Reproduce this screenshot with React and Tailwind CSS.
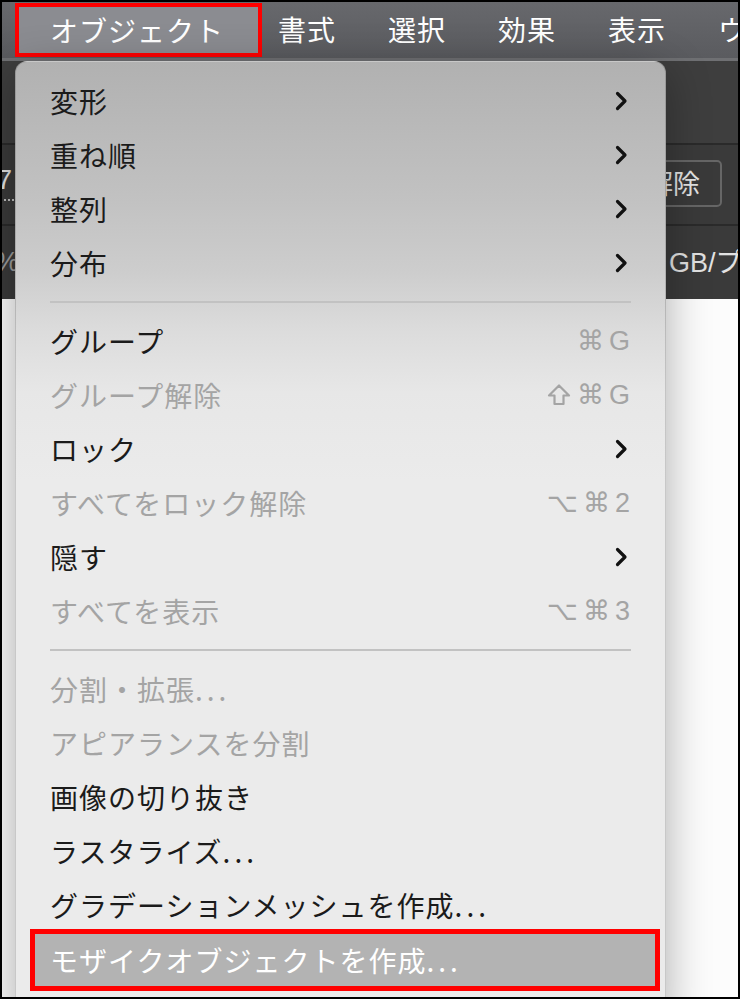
import React from 'react';

const items = [
    { label: '変形', sub: true },
    { label: '重ね順', sub: true },
    { label: '整列', sub: true },
    { label: '分布', sub: true },
    { sep: true },
    { label: 'グループ', keys: ['⌘', 'G'] },
    { label: 'グループ解除', keys: ['shift', '⌘', 'G'], disabled: true },
    { label: 'ロック', sub: true },
    { label: 'すべてをロック解除', keys: ['⌥', '⌘', '2'], disabled: true },
    { label: '隠す', sub: true },
    { label: 'すべてを表示', keys: ['⌥', '⌘', '3'], disabled: true },
    { sep: true },
    { label: '分割・拡張...', disabled: true },
    { label: 'アピアランスを分割', disabled: true },
    { label: '画像の切り抜き' },
    { label: 'ラスタライズ...' },
    { label: 'グラデーションメッシュを作成...' },
    { label: 'モザイクオブジェクトを作成...', active: true },
];

const jp = { fontFamily: '"Noto Sans CJK JP", "Noto Sans", sans-serif' };
const sym = { fontFamily: '"Liberation Sans", "DejaVu Sans", sans-serif' };

// trailing "..." gets wider spacing like the mac menu font
const Label = ({ text }) => {
    if (text.endsWith('...')) {
        return (
            <>
                {text.slice(0, -3)}
                <span className="tracking-[4px]">...</span>
            </>
        );
    }
    return text;
};

const Chevron = () => (
    <svg width="13" height="20" viewBox="0 0 13 20" className="mr-[3px]">
        <polyline points="2.5,2.5 10,10 2.5,17.5" fill="none" stroke="#111" strokeWidth="3.2" strokeLinecap="round" strokeLinejoin="round" />
    </svg>
);

const ShiftKey = () => (
    <svg width="24" height="24" viewBox="0 0 24 24" className="mr-[2px]">
        <path d="M12 2.5 L22 12.5 L16.5 12.5 L16.5 21 L7.5 21 L7.5 12.5 L2 12.5 Z" fill="none" stroke="#a4a4a4" strokeWidth="2.2" strokeLinejoin="round" />
    </svg>
);

const MenuRow = ({ item }) => {
    if (item.sep) {
        return (
            <div className="h-[24px] flex items-start pt-[11px] px-[34px]">
                <div className="h-[2px] w-full bg-[#c2c2c2]" />
            </div>
        );
    }
    if (item.active) {
        return (
            <div className="mt-[2px] ml-[19px] mr-[10px] h-[52px] bg-[#b3b3b3] outline-[5px] outline-solid outline-[#ff0000] flex items-center pl-[15px] text-white text-[28px] tracking-[1px]" style={jp}>
                <Label text={item.label} />
            </div>
        );
    }
    return (
        <div className={`h-[54px] flex items-center justify-between pl-[34px] pr-[34px] text-[28px] tracking-[1px] ${item.disabled ? 'text-[#a4a4a4]' : 'text-[#1b1b1b]'}`}>
            <span style={jp}><Label text={item.label} /></span>
            {item.sub && <Chevron />}
            {item.keys && (
                <span className="flex items-center gap-[4px] text-[27px] text-[#a4a4a4]" style={sym}>
                    {item.keys.map((k, i) => (k === 'shift' ? <ShiftKey key={i} /> : <span key={i}>{k}</span>))}
                </span>
            )}
        </div>
    );
};

export default function App() {
    return (
        <div className="relative w-[740px] h-[999px] overflow-hidden bg-[#fcfcfc]" style={jp}>
            {/* app menu bar */}
            <div className="h-[58px] flex items-start bg-gradient-to-b from-[#68696d] to-[#5a5b5f] overflow-hidden">
                <div className="shrink-0 ml-[15px] mt-[3px] h-[54px] w-[247px] border-[4px] border-[#ff0000] bg-[#8b8c91] flex items-center pl-[31px] text-white text-[28px] tracking-[1px]">
                    オブジェクト
                </div>
                <div className="shrink-0 ml-[16px] h-full flex items-center gap-[52px] text-white text-[28px] tracking-[1px] whitespace-nowrap">
                    <span>書式</span>
                    <span>選択</span>
                    <span>効果</span>
                    <span>表示</span>
                    <span>ウィンドウ</span>
                </div>
            </div>
            <div className="h-[3px] bg-[#6f7073]" />

            {/* workspace behind the menu */}
            <div className="h-[84px] bg-[#3e3e3e] border-b-2 border-[#2a2a2a]" />
            <div className="h-[81px] bg-[#3a3a3a] border-b-2 border-[#2a2a2a] flex items-start justify-between">
                <div className="mt-[20px] flex flex-col">
                    <span className="text-[27px] leading-[30px] text-[#e2e2e2] -ml-[3px]" style={sym}>7</span>
                    <span className="mt-[4px] w-[14px] border-b-2 border-dotted border-[#bdbdbd]" />
                </div>
                <div className="mt-[15px] mr-[18px] h-[47px] flex items-center pl-[20px] pr-[20px] border-2 border-[#666] rounded-[5px] text-[27px] text-[#e4e4e4]">
                    解除
                </div>
            </div>
            <div className="h-[73px] bg-[#3a3a3a] flex items-center justify-between">
                <span className="text-[27px] text-[#9c9c9c] -ml-[5px]" style={sym}>%</span>
                <span className="w-[71px] overflow-hidden whitespace-nowrap text-[27px] text-[#e2e2e2]">
                    <span style={sym}>GB/</span>プレビュー
                </span>
            </div>

            {/* object menu dropdown */}
            <div className="absolute left-[15px] top-[61px] w-[651px] h-[960px] rounded-t-[12px] border border-black/15 shadow-[0_10px_45px_rgba(0,0,0,0.32)] bg-[linear-gradient(to_bottom,#b1b1b1_0px,#c2c2c2_140px,#cdcdcd_210px,#dbdbdb_265px,#e7e7e7_330px,#ebebeb_420px,#ebebeb_100%)]">
                <div className="pt-[12px]">
                    {items.map((item, i) => <MenuRow key={i} item={item} />)}
                </div>
            </div>

            {/* screenshot frame */}
            <div className="absolute inset-0 border-2 border-black pointer-events-none" />
        </div>
    );
}
